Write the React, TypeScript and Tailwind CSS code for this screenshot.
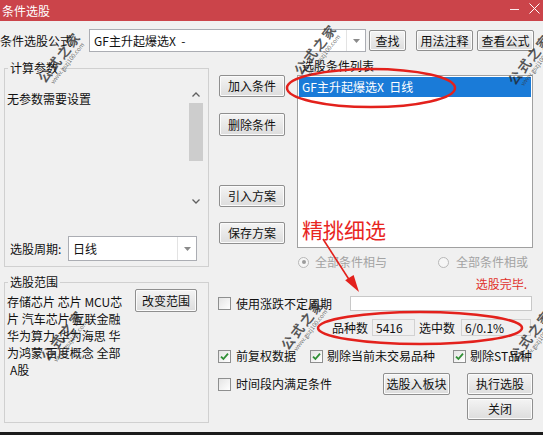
import type { ReactNode } from "react";

const font = "font-['Noto_Sans_CJK_SC','Noto_Sans',sans-serif]";

function Btn({ children, className = "" }: { children: ReactNode; className?: string }) {
  return (
    <button
      type="button"
      className={`flex shrink-0 items-center justify-center rounded-[2px] border border-[#8f8f8f] bg-linear-to-b from-[#f4f4f4] to-[#dddddd] text-[12px] leading-none text-[#111] shadow-[inset_0_0_0_1px_#fbfbfb] ${className}`}
    >
      {children}
    </button>
  );
}

function DownArrow() {
  return (
    <svg width="7" height="4" viewBox="0 0 7 4" aria-hidden>
      <path d="M0 0h7L3.5 4z" fill="#8a8a8a" />
    </svg>
  );
}

function Check({ checked = false }: { checked?: boolean }) {
  return (
    <span className="flex h-[13px] w-[13px] shrink-0 items-center justify-center border border-[#8e8f8f] bg-linear-to-br from-[#e4e4e4] to-white">
      {checked ? (
        <svg width="9" height="9" viewBox="0 0 9 9" aria-hidden>
          <path d="M1 4.6 3.4 7 8 1.6" fill="none" stroke="#2f8f35" strokeWidth="1.8" />
        </svg>
      ) : null}
    </span>
  );
}

function Radio({ on = false }: { on?: boolean }) {
  return (
    <span className="flex h-[11px] w-[11px] shrink-0 items-center justify-center rounded-full border border-[#b8b8b8] bg-[#f6f6f6]">
      {on ? <span className="h-[4px] w-[4px] rounded-full bg-[#9c9c9c]" /> : null}
    </span>
  );
}

function Mark({ className }: { className: string }) {
  return (
    <div
      className={`pointer-events-none absolute flex w-[72px] rotate-[-52deg] flex-col items-center leading-none ${className}`}
    >
      <span className="text-[13px] font-bold tracking-[2px] text-[#222]/75">公式之家</span>
      <span className="mt-[1px] text-[6px] text-[#333]/75">www.gszj100.com</span>
    </div>
  );
}

export default function App() {
  return (
    <div
      className={`relative flex h-[435px] w-[543px] flex-col overflow-hidden bg-[#f0f0f0] text-[12px] text-[#111] ${font}`}
    >
      {/* title bar */}
      <div className="flex h-[21px] shrink-0 items-center bg-[#cb444a] pl-[2px] text-white">
        <span className="leading-none">条件选股</span>
        <span className="mb-[3px] ml-auto h-px w-[9px] bg-white/90" />
        <svg className="mb-[5px] ml-[10px] mr-[3px]" width="11" height="11" viewBox="0 0 11 11" aria-hidden>
          <path d="M0.5 0.5 10.5 10.5M10.5 0.5 0.5 10.5" stroke="#fff" strokeWidth="1" />
        </svg>
      </div>

      {/* formula row */}
      <div className="mt-[8px] flex h-[23px] shrink-0 items-center">
        <span className="w-[89px] leading-none">条件选股公式</span>
        <div className="flex h-[23px] w-[277px] items-center border border-[#abadb3] bg-white">
          <span className="flex-1 pl-[4px] leading-none">GF主升起爆选X&nbsp;&nbsp;-</span>
          <span className="flex h-full w-[19px] items-center justify-center border-l border-[#e3e3e3]">
            <DownArrow />
          </span>
        </div>
        <Btn className="ml-[3px] h-[21px] w-[37px]">查找</Btn>
        <Btn className="ml-[10px] h-[21px] w-[57px]">用法注释</Btn>
        <Btn className="ml-[4px] h-[21px] w-[57px]">查看公式</Btn>
      </div>

      <div className="flex flex-1">
        {/* left column */}
        <div className="flex w-[210px] shrink-0 flex-col pl-[4px]">
          <fieldset className="mt-[9px] h-[206px] w-[205px] border border-[#d0d0d0]">
            <legend className="ml-[3px] px-[2px] leading-[14px]">计算参数</legend>
            <div className="flex flex-col">
              <div className="flex items-start">
                <span className="flex-1 pl-[2px] pt-[17px] leading-[14px]">无参数需要设置</span>
                <div className="mr-[4px] mt-[11px] flex h-[124px] w-[16px] flex-col items-center bg-[#f0f0f0]">
                  <svg className="mt-[6px]" width="8" height="5" viewBox="0 0 8 5" aria-hidden>
                    <path d="M0.5 4.5 4 1 7.5 4.5" fill="none" stroke="#606060" strokeWidth="1.3" />
                  </svg>
                  <span className="mt-[6px] h-[58px] w-[14px] bg-[#cdcdcd]" />
                  <svg className="mt-auto mb-[6px]" width="8" height="5" viewBox="0 0 8 5" aria-hidden>
                    <path d="M0.5 0.5 4 4 7.5 0.5" fill="none" stroke="#606060" strokeWidth="1.3" />
                  </svg>
                </div>
              </div>
              <div className="mt-[26px] flex items-center pl-[5px]">
                <span className="w-[58px] leading-none">选股周期:</span>
                <div className="flex h-[25px] w-[129px] items-center border border-[#abadb3] bg-white">
                  <span className="flex-1 pl-[4px] leading-none">日线</span>
                  <span className="flex h-full w-[19px] items-center justify-center border-l border-[#e3e3e3]">
                    <DownArrow />
                  </span>
                </div>
              </div>
            </div>
          </fieldset>

          <fieldset className="mt-[8px] h-[148px] w-[205px] border border-[#d0d0d0]">
            <legend className="ml-[3px] px-[2px] leading-[14px]">选股范围</legend>
            <div className="flex items-start">
              <div className="w-[128px] pl-[2px] pt-[4px] leading-[17px]">
                <div>存储芯片 芯片 MCU芯</div>
                <div>片 汽车芯片 互联金融</div>
                <div>华为算力 华为海思 华</div>
                <div>为鸿蒙 百度概念 全部</div>
                <div className="pl-[3px]">A股</div>
              </div>
              <Btn className="ml-[2px] h-[23px] w-[62px]">改变范围</Btn>
            </div>
          </fieldset>
        </div>

        {/* right area */}
        <div className="flex flex-1 flex-col">
          <div className="flex">
            <div className="ml-[9px] flex w-[66px] flex-col pt-[23px]">
              <Btn className="h-[22px] w-[66px]">加入条件</Btn>
              <Btn className="mt-[16px] h-[23px] w-[66px]">删除条件</Btn>
              <Btn className="mt-[49px] h-[22px] w-[66px]">引入方案</Btn>
              <Btn className="mt-[15px] h-[22px] w-[66px]">保存方案</Btn>
            </div>
            <div className="ml-[12px] flex w-[236px] flex-col">
              <span className="mt-[7px] pl-[5px] leading-[14px]">选股条件列表</span>
              <div className="relative mt-[2px] h-[173px] border border-[#a0a0a0] bg-white p-px">
                <div className="flex h-[20px] items-center bg-[#1a7bd8] pl-[3px] leading-none text-white">
                  GF主升起爆选X&nbsp;&nbsp;日线
                </div>
                <span className="absolute left-[4px] top-[141px] text-[21px] leading-[24px] text-[#e8261f]">
                  精挑细选
                </span>
              </div>
              <div className="mt-[7px] flex h-[14px] items-center text-[#a3a3a3]">
                <span className="ml-[1px]">
                  <Radio on />
                </span>
                <span className="ml-[6px] leading-none">全部条件相与</span>
                <span className="ml-[51px]">
                  <Radio />
                </span>
                <span className="ml-[7px] leading-none">全部条件相或</span>
              </div>
            </div>
          </div>

          {/* bottom right */}
          <div className="mt-[8px] pr-[16px] text-right leading-[14px] text-[#e0302a]">选股完毕.</div>
          <div className="mt-[5px] flex h-[15px] items-center pl-[8px] pr-[11px]">
            <Check />
            <span className="ml-[5px] leading-none">使用涨跌不定周期</span>
            <span className="ml-auto h-[15px] w-[182px] border border-[#c8c8c8] bg-white" />
          </div>
          <div className="mt-[8px] flex h-[17px] items-center pl-[122px]">
            <span className="leading-none">品种数</span>
            <span className="ml-[4px] flex h-[17px] w-[43px] items-center border border-[#d2d2d2] pl-[3px] leading-none">
              5416
            </span>
            <span className="ml-[4px] leading-none">选中数</span>
            <span className="ml-[6px] flex h-[17px] w-[70px] items-center border border-[#d2d2d2] pl-[3px] leading-none">
              6/0.1%
            </span>
          </div>
          <div className="mt-[13px] flex h-[14px] items-center pl-[8px]">
            <div className="flex w-[92px] items-center">
              <Check checked />
              <span className="ml-[5px] leading-none">前复权数据</span>
            </div>
            <div className="flex w-[143px] items-center">
              <Check checked />
              <span className="ml-[4px] leading-none">剔除当前未交易品种</span>
            </div>
            <div className="flex items-center">
              <Check checked />
              <span className="ml-[4px] leading-none">剔除ST品种</span>
            </div>
          </div>
          <div className="mt-[10px] flex h-[22px] items-center pl-[8px]">
            <div className="flex w-[165px] items-center">
              <Check />
              <span className="ml-[5px] leading-none">时间段内满足条件</span>
            </div>
            <Btn className="h-[22px] w-[67px]">选股入板块</Btn>
            <Btn className="ml-[17px] h-[22px] w-[66px]">执行选股</Btn>
          </div>
          <div className="mt-[3px] flex h-[22px] justify-end pr-[10px]">
            <Btn className="h-[22px] w-[66px]">关闭</Btn>
          </div>
        </div>
      </div>

      <div className="mt-auto h-[3px] shrink-0 bg-[#1b1b1b]" />

      {/* annotations */}
      <svg className="pointer-events-none absolute inset-0" width="543" height="435" aria-hidden>
        <ellipse cx="371" cy="88" rx="84" ry="19" fill="none" stroke="#e3211c" strokeWidth="2.5" />
        <ellipse cx="420" cy="328" rx="102" ry="16" fill="none" stroke="#e3211c" strokeWidth="2.5" />
        <path d="M323 239 350 281" stroke="#e3211c" strokeWidth="1.6" />
        <path d="M359 292 353.6 274.9 345.2 280.3z" fill="#e3211c" />
      </svg>

      <Mark className="left-[26px] top-[49px]" />
      <Mark className="left-[282px] top-[41px]" />
      <Mark className="left-[496px] top-[51px]" />
      <Mark className="left-[29px] top-[327px]" />
      <Mark className="left-[269px] top-[316px]" />
      <Mark className="left-[497px] top-[327px]" />
    </div>
  );
}
